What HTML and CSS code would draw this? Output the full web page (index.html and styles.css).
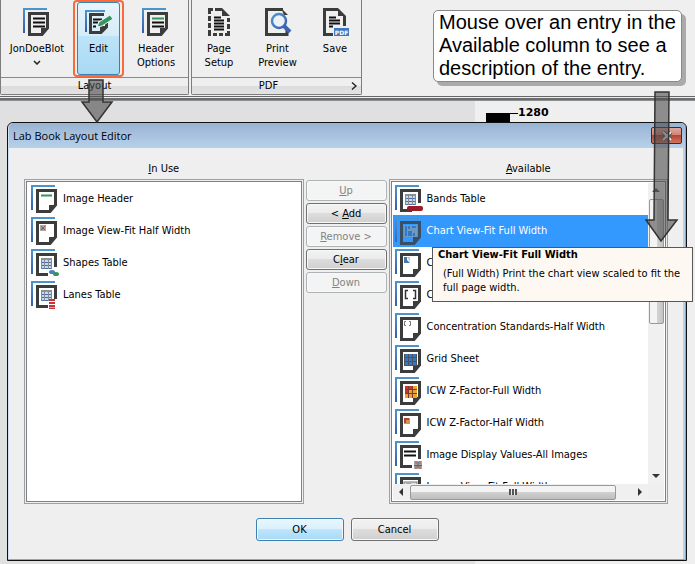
FILE: index.html
```html
<!DOCTYPE html>
<html lang="en">
<head>
<meta charset="utf-8">
<title>Lab Book Layout Editor</title>
<link rel="stylesheet" href="styles.css">
</head>
<body>
<svg class="defs" aria-hidden="true">
  <defs>
    <linearGradient id="blueH" x1="0" y1="0" x2="0" y2="1"><stop offset="0" stop-color="#4c96cc"/><stop offset="1" stop-color="#3a5cab"/></linearGradient>
    <linearGradient id="lens" x1="0" y1="0" x2="1" y2="1"><stop offset="0" stop-color="#4c9bd0"/><stop offset="1" stop-color="#3a5cab"/></linearGradient>
    <symbol id="back" viewBox="0 0 28 28">
      <path d="M0 0H24V2H2V25H0Z" fill="url(#blueH)"/>
    </symbol>
    <symbol id="page" viewBox="0 0 28 28">
      <use href="#back" width="28" height="28"/>
      <path d="M6.500 5.500H24.500V20L19 26.500H6.500Z" fill="none" stroke="#3b3d3d" stroke-width="3"/>
      <path d="M18 20H26L18 28Z" fill="#3b3d3d"/>
    </symbol>
    <symbol id="open" viewBox="0 0 28 28">
      <use href="#back" width="28" height="28"/>
      <path d="M24.500 18V5.500H6.500V25.500H17" fill="none" stroke="#3b3d3d" stroke-width="3"/>
    </symbol>
    <symbol id="grid" viewBox="0 0 12 12">
      <path d="M0 0H11V11H0Z" fill="#c9d8ea"/>
      <path d="M0 0H11V2H0Z" fill="#8c9298"/>
      <path d="M0 4.500H11M0 7.500H11M0 10.500H11" stroke="#3e72b8"/>
      <path d="M.5 0V11M3.500 0V11M7.500 0V11M10.500 0V11" stroke="#858b94"/>
    </symbol>
  </defs>
</svg>

<header class="ribbon">
  <section class="group" aria-label="Layout">
    <div class="tools">
      <button class="tool tool-blot" type="button">
        <svg viewBox="0 0 28 28"><use href="#page"/><path d="M10 10.500H22M10 14.500H22M10 18.500H22" stroke="#111" stroke-width="2"/></svg>
        <span>JonDoeBlot</span>
        <svg class="chevron" viewBox="0 0 8 5"><path d="M1 1L4 4L7 1" fill="none" stroke="#222" stroke-width="1.500"/></svg>
      </button>
      <button class="tool tool-edit" type="button">
        <span class="hot">
          <svg viewBox="0 0 28 28"><path d="M0 2H20V4H2V24H0Z" fill="url(#blueH)"/><path d="M19 6.500H5.500V24.500H16L21.500 19V14" fill="none" stroke="#3b3d3d" stroke-width="3"/><path d="M15 18H23L15 26Z" fill="#3b3d3d"/><path d="M8 11.500H17M8 14.500H13M8 18.500H11" stroke="#111" stroke-width="2"/><path d="M12 19L14 14L25 7L28 11L17 18Z" fill="#33975d" stroke="#edf5fa"/></svg>
          <span>Edit</span>
        </span>
      </button>
      <button class="tool tool-header" type="button">
        <svg viewBox="0 0 28 28"><use href="#page"/><path d="M10 10.500H22" stroke="#35945a" stroke-width="2"/><path d="M10 14.500H22M10 18.500H22" stroke="#111" stroke-width="2"/></svg>
        <span>Header<br>Options</span>
      </button>
    </div>
    <div class="group-name"><span>Layout</span></div>
  </section>
  <section class="group" aria-label="PDF">
    <div class="tools">
      <button class="tool tool-page" type="button">
        <svg viewBox="0 0 28 28"><path d="M4 1.500H8M10 1.500H17M4.500 0V6M4.500 8V13M4.500 15V20M4.500 22V28M8 26.500H12M14 26.500H18M20 26.500H25M23.500 28V23M23.500 21V16M23.500 14V10" stroke="#3b3d3d" stroke-width="3" fill="none"/><path d="M17 0L25 8H17Z" fill="#3b3d3d"/><path d="M9 9.500H16M9 12.500H19M9 15.500H19M9 18.500H19M9 21.500H19" stroke="#111" stroke-width="2"/></svg>
        <span>Page<br>Setup</span>
      </button>
      <button class="tool tool-print" type="button">
        <svg viewBox="0 0 28 28"><path d="M19 1.500H2.500V26.500H23V22" fill="none" stroke="#3b3d3d" stroke-width="3"/><path d="M17 0L24 7H20Z" fill="#3b3d3d"/><circle cx="15" cy="13" r="7" fill="#edf1f5" stroke="url(#lens)" stroke-width="2.500"/><path d="M20 18L26 24" stroke="#3e62b0" stroke-width="4"/></svg>
        <span>Print<br>Preview</span>
      </button>
      <button class="tool tool-save" type="button">
        <svg viewBox="0 0 28 28"><path d="M17 1.500H3.500V26.500H12M23.500 18V8" fill="none" stroke="#3b3d3d" stroke-width="3"/><path d="M17 0L25 8H17Z" fill="#3b3d3d"/><path d="M8 9.500H15M8 12.500H19M8 15.500H19M8 18.500H12" stroke="#111" stroke-width="2"/><rect x="13" y="20" width="15" height="8" fill="#3f78bd"/><text class="badge-text" x="20.500" y="26.500" text-anchor="middle">PDF</text></svg>
        <span>Save</span>
      </button>
    </div>
    <div class="group-name group-name-pdf"><span>PDF</span><button class="launcher" type="button" aria-label="PDF options"><svg viewBox="0 0 6 9"><path d="M1 1L5 4.500L1 8" fill="none" stroke="#222" stroke-width="1.500"/></svg></button></div>
  </section>
</header>

<main class="workspace">
  <div class="ladder"><span class="band"></span><span class="tick"></span><span>1280</span></div>

  <div class="dialog" role="dialog" aria-labelledby="dlg-title">
    <div class="titlebar">
      <h1 id="dlg-title">Lab Book Layout Editor</h1>
      <button class="close" type="button" aria-label="Close"><svg viewBox="0 0 12 10"><path d="M2 1L10 9M10 1L2 9" stroke="#53565f" stroke-width="4"/><path d="M2 1L10 9M10 1L2 9" stroke="#f2f2f2" stroke-width="2"/></svg></button>
    </div>
    <div class="columns">
      <h2 id="in-use"><u>I</u>n Use</h2>
      <h2 id="available" class="head-available"><u>A</u>vailable</h2>

      <div class="box box-use">
        <ul class="rows" role="listbox" aria-labelledby="in-use">
          <li role="option"><svg viewBox="0 0 28 28"><use href="#page"/><path d="M10 10.500H21" stroke="#35945a" stroke-width="2"/></svg>Image Header</li>
          <li role="option"><svg viewBox="0 0 28 28"><use href="#page"/><rect x="9" y="8" width="6" height="6" fill="#a9aaa8"/><path d="M10 9L14 13M14 9L10 13" stroke="#b8434b"/><path d="M10 12h2" stroke="#358b58"/></svg>Image View-Fit Half Width</li>
          <li role="option"><svg viewBox="0 0 28 28"><use href="#open"/><use href="#grid" x="10" y="9" width="12" height="12"/><ellipse cx="21" cy="23" rx="3" ry="2" fill="#4a7fc3"/><ellipse cx="25" cy="25" rx="3" ry="2" fill="#35945a"/></svg>Shapes Table</li>
          <li role="option"><svg viewBox="0 0 28 28"><use href="#open"/><use href="#grid" x="10" y="9" width="12" height="12"/><path d="M18 19H24M18 22H24M18 25H24M18 27.500H24" stroke="#c7343c" stroke-width="2"/></svg>Lanes Table</li>
        </ul>
      </div>

      <div class="moves">
        <button type="button" disabled><u>U</u>p</button>
        <button type="button">&lt; <u>A</u>dd</button>
        <button type="button" disabled><u>R</u>emove &gt;</button>
        <button type="button">C<u>l</u>ear</button>
        <button type="button" disabled><u>D</u>own</button>
      </div>

      <div class="box box-available">
        <ul class="rows" role="listbox" aria-labelledby="available">
          <li role="option"><svg viewBox="0 0 28 28"><use href="#open"/><use href="#grid" x="10" y="9" width="12" height="12"/><rect x="12" y="21" width="16" height="5" rx="2" fill="#9c1c25"/></svg>Bands Table</li>
          <li role="option" class="selected" aria-selected="true" aria-describedby="tip"><svg viewBox="0 0 28 28"><use href="#page"/><rect x="9" y="8" width="13" height="12" fill="#7f99b3"/><path d="M10 9H12V19H10ZM13 9H15V12H13ZM17 9H21V11H17ZM13 14H17V19H13ZM18 16H20V19H18Z" fill="#2f72bd"/></svg>Chart View-Fit Full Width</li>
          <li role="option"><svg viewBox="0 0 28 28"><use href="#page"/><path d="M9 8V14H15L12 11V8Z" fill="#4675af"/><path d="M12 8h3v5z" fill="#c5cbd0"/></svg>C</li>
          <li role="option"><svg viewBox="0 0 28 28"><use href="#page"/><path d="M13 9.500H10.500V17.500H13M18 9.500H20.500V17.500H18" fill="none" stroke="#333" stroke-width="1.500"/></svg>C</li>
          <li role="option"><svg viewBox="0 0 28 28"><use href="#page"/><path d="M11 8.500H9.500V12.500H11M14 8.500H15.500V12.500H14" fill="none" stroke="#777"/></svg>Concentration Standards-Half Width</li>
          <li role="option"><svg viewBox="0 0 28 28"><use href="#page"/><rect x="9" y="9" width="13" height="12" fill="#3977bd"/><path d="M9 12.500H22M9 16.500H22M9 20.500H22M9.500 9V21M13.500 9V21M17.500 9V21M21.500 9V21" stroke="#4b5361"/></svg>Grid Sheet</li>
          <li role="option"><svg viewBox="0 0 28 28"><use href="#page"/><rect x="10" y="9" width="12" height="12" fill="#eea329"/><path d="M10 9H18V13H14V17H10Z" fill="#d3312a"/><path d="M10 12.500H22M10 16.500H22M13.500 9V21M17.500 9V21" stroke="#743d35"/></svg>ICW Z-Factor-Full Width</li>
          <li role="option"><svg viewBox="0 0 28 28"><use href="#page"/><rect x="9" y="9" width="6" height="6" fill="#d59543"/><path d="M9 9H14V11H11V14H9Z" fill="#a94440"/></svg>ICW Z-Factor-Half Width</li>
          <li role="option"><svg viewBox="0 0 28 28"><use href="#open"/><path d="M9 10.500H21M9 14.500H21" stroke="#111" stroke-width="2"/><rect x="19" y="20" width="8" height="8" fill="#a5a5a5"/><path d="M21 20V28M25 20V28" stroke="#bc5960" stroke-dasharray="3 2"/><path d="M23 21V27M19 24.500H27" stroke="#4b6f59"/></svg>Image Display Values-All Images</li>
          <li role="option"><svg viewBox="0 0 28 28"><use href="#page"/><rect x="9" y="9" width="13" height="12" fill="#dedede" stroke="#777"/><path d="M11 11.500H16" stroke="#35945a" stroke-width="2"/></svg>Image View-Fit Full Width</li>
        </ul>
        <div class="bar bar-v" aria-hidden="true"><i class="up"></i><span class="thumb"></span><i class="down"></i></div>
        <div class="bar bar-h" aria-hidden="true"><i class="left"></i><span class="thumb"><b></b></span><i class="right"></i></div>
        <div class="corner"></div>
      </div>
    </div>
    <div class="actions">
      <button type="button" class="ok">OK</button>
      <button type="button">Cancel</button>
    </div>
  </div>
</main>

<div class="tip" id="tip" role="tooltip"><strong>Chart View-Fit Full Width</strong><p>(Full Width) Print the chart view scaled to fit the full page width.</p></div>
<p class="callout">Mouse over an entry in the<br>Available column to see a<br>description of the entry.</p>
<svg class="arrow arrow-edit" viewBox="0 0 34 45" aria-hidden="true"><path d="M9 1H23V23H32L17 43L2 23H9Z"/></svg>
<svg class="arrow arrow-list" viewBox="0 0 34 152" aria-hidden="true"><path d="M10 1H24L23 129H32L16 150L1 129H9Z"/></svg>
</body>
</html>
```
FILE: styles.css
```css
* { box-sizing: border-box; }

body {
  margin: 0;
  min-height: 100vh;
  display: flex;
  flex-direction: column;
  position: relative;
  background: #efefef;
  color: #000;
  font: 11px/14px "DejaVu Sans Condensed", "Noto Sans", sans-serif;
}

button { margin: 0; padding: 0; font: inherit; color: inherit; }
h1, h2, p, ul { margin: 0; padding: 0; font: inherit; }
.defs { position: absolute; width: 0; height: 0; }

/* Ribbon */
.ribbon {
  display: flex;
  gap: 2px;
  height: 101px;
  padding-bottom: 6px;
  background: linear-gradient(#666 0 1px, #efefef 1px 2px, #6c6c6c 2px 4px, #8a8f93 4px 5px) bottom / 100% 5px no-repeat #efefef;
}
.group {
  display: flex;
  flex-direction: column;
  border: solid #7d7d7d;
  border-width: 0 1px 1px;
  border-radius: 0 0 2px 2px;
}
.tools { display: flex; flex: 1; }
.tool {
  display: flex;
  flex-direction: column;
  align-items: center;
  padding-top: 8px;
  border: 0;
  background: none;
}
.tool svg { width: 28px; height: 28px; margin-bottom: 6px; }
.tool svg.chevron { width: 8px; height: 5px; margin-top: 4px; }
.tool-blot { width: 72px; }
.tool-edit {
  width: 51px;
  height: 77px;
  padding: 0 2px;
  border: 2px solid #fa6b3c;
  border-radius: 4px;
}
.hot {
  display: flex;
  flex-direction: column;
  align-items: center;
  width: 100%;
  height: 100%;
  padding-top: 5px;
  border: 1px solid #3c7fb1;
  border-radius: 3px;
  background: linear-gradient(#e8f4fb, #d5ecf8 46%, #bde4f8 46%, #a8d9f4);
}
.tool-header { width: 64px; }
.tool-page { width: 54px; }
.tool-print { width: 63px; }
.tool-save { width: 52px; }
.badge-text { font: bold 6px "DejaVu Sans", sans-serif; fill: #fff; }
.group-name {
  display: flex;
  align-items: center;
  justify-content: center;
  position: relative;
  height: 17px;
  border-top: 1px solid #8a8a8a;
  background: linear-gradient(#efefef 50%, #dcdcdc 50%, #e3e3e3);
}
.group-name-pdf { padding-right: 16px; }
.launcher { position: absolute; right: 4px; top: 3px; border: 0; background: none; }
.launcher svg { display: block; width: 6px; height: 10px; }

/* Workspace */
.workspace {
  flex: 1;
  padding: 0 8px 3px 7px;
  background: linear-gradient(90deg, #e0e0e0 475px, #efefef 475px);
}
.ladder {
  display: flex;
  align-items: center;
  height: 21px;
  padding: 3px 0 0 479px;
  font: bold 11px/14px "DejaVu Sans", sans-serif;
}
.band { width: 24px; height: 9px; margin-top: 9px; background: #000; }
.tick { width: 8px; height: 1px; background: #000; }

/* Dialog */
.dialog {
  border: 1px solid #111;
  border-radius: 6px 6px 0 0;
  background: #efefef;
  box-shadow: inset -1px -1px #48c6e0, inset 1px 1px #cfe0f4, inset -3px 0 #b8d2ec;
}
.titlebar {
  display: flex;
  align-items: center;
  justify-content: space-between;
  height: 25px;
  margin: 0 1px;
  padding: 0 3px 0 4px;
  border-radius: 5px 5px 0 0;
  background: linear-gradient(#98b3d3, #b8d1ea);
}
.titlebar h1 { font: 11px/16px "Open Sans", "Noto Sans", sans-serif; }
.close {
  display: grid;
  place-items: center;
  width: 31px;
  height: 17px;
  border: 1px solid #5b1f1f;
  border-radius: 2px;
  background: linear-gradient(#dfa79c, #cf8375 50%, #b8432f 50%, #cf7460);
}
.close svg { width: 12px; height: 10px; }
.columns {
  display: grid;
  grid-template-columns: minmax(0, 1fr) 81px minmax(0, 1fr);
  grid-template-rows: 31px 325px;
  column-gap: 2px;
  padding: 0 18px 0 16px;
}
.columns h2 { align-self: end; margin-bottom: 3px; text-align: center; }
.head-available { grid-column: 3; }

.box {
  border: 1px solid #a0a0a0;
  box-shadow: inset 0 0 0 1px #efefef, inset 0 0 0 2px #7b808a;
  background: #fff;
  padding: 3px;
}
.rows { list-style: none; overflow: hidden; min-height: 0; }
.rows li {
  display: flex;
  align-items: center;
  gap: 4px;
  height: 32px;
  padding-left: 3px;
  white-space: nowrap;
}
.box-available .rows li { padding-left: 2px; }
.rows li svg { flex: none; width: 28px; height: 28px; }
.rows li.selected { background: #3399ff; color: #fff; }
.selected svg { opacity: .8; }
.box-available {
  display: grid;
  grid-template-columns: minmax(0, 1fr) 16px;
  grid-template-rows: minmax(0, 1fr) 16px;
}
.bar { display: flex; align-items: center; background: #f0f0f0; }
.bar-v { flex-direction: column; grid-column: 2; grid-row: 1; }
.bar-h { grid-column: 1; grid-row: 2; }
.corner { background: #efefef; }
.thumb {
  display: grid;
  place-items: center;
  border: 1px solid #999;
  border-radius: 2px;
}
.bar-v .thumb { width: 15px; height: 125px; margin-bottom: auto; background: linear-gradient(90deg, #f3f3f3 50%, #d5d5d5 50%, #c3c3c3); }
.bar-h .thumb { flex: 1; height: 15px; margin-right: 16px; background: linear-gradient(#f3f3f3 50%, #d0d0d0 50%, #bdbdbd); }
.thumb b { width: 8px; height: 6px; background: repeating-linear-gradient(90deg, #555 0 2px, #eee 2px 3px); }
.bar i { flex: none; border: 4px solid transparent; }
.bar .up { margin: 5px 0 7px; border-top-width: 0; border-bottom-color: #555; }
.bar .down { margin: 6px 0; border-bottom-width: 0; border-top-color: #333; }
.bar .left { margin: 0 7px 0 6px; border-left-width: 0; border-right-color: #333; }
.bar .right { margin: 0 6px; border-right-width: 0; border-left-color: #333; }

.moves { display: flex; flex-direction: column; gap: 2px; padding-top: 1px; }
.moves button, .actions button {
  height: 21px;
  border: 1px solid #707070;
  border-radius: 3px;
  background: linear-gradient(#f2f2f2, #ebebeb 50%, #dddddd 50%, #cfcfcf);
  box-shadow: inset 0 0 0 1px #f8f8f8;
}
.moves button:disabled { color: #838383; border-color: #adb2b5; background: #f4f4f4; }
.actions { display: flex; justify-content: center; gap: 7px; padding: 14px 0 19px; }
.actions button { width: 88px; height: 23px; }
.actions .ok { border-color: #3c7fb1; background: linear-gradient(#eaf6fd, #d9f0fc 50%, #bee6fd 50%, #a7d9f5); }

/* Overlays */
.tip {
  position: absolute;
  left: 432px;
  top: 247px;
  width: 261px;
  padding: 0 6px 6px 5px;
  border: 1px solid #575757;
  background: #fdf9f2;
}
.tip strong { display: block; margin-bottom: 5px; }
.tip p { padding-left: 5px; }
.callout {
  position: absolute;
  left: 433px;
  top: 10px;
  width: 249px;
  padding: 0 5px 1px;
  border: 1px solid #888;
  border-radius: 5px;
  background: #fff;
  box-shadow: 4px 4px #aaa;
  font: 20px/23px "Liberation Sans", sans-serif;
  white-space: nowrap;
}
.arrow { position: absolute; fill: rgba(75, 75, 75, .6); stroke: #333; stroke-width: 1.5; }
.arrow-edit { left: 80px; top: 79px; width: 34px; height: 45px; }
.arrow-list { left: 645px; top: 91px; width: 34px; height: 152px; }
```
